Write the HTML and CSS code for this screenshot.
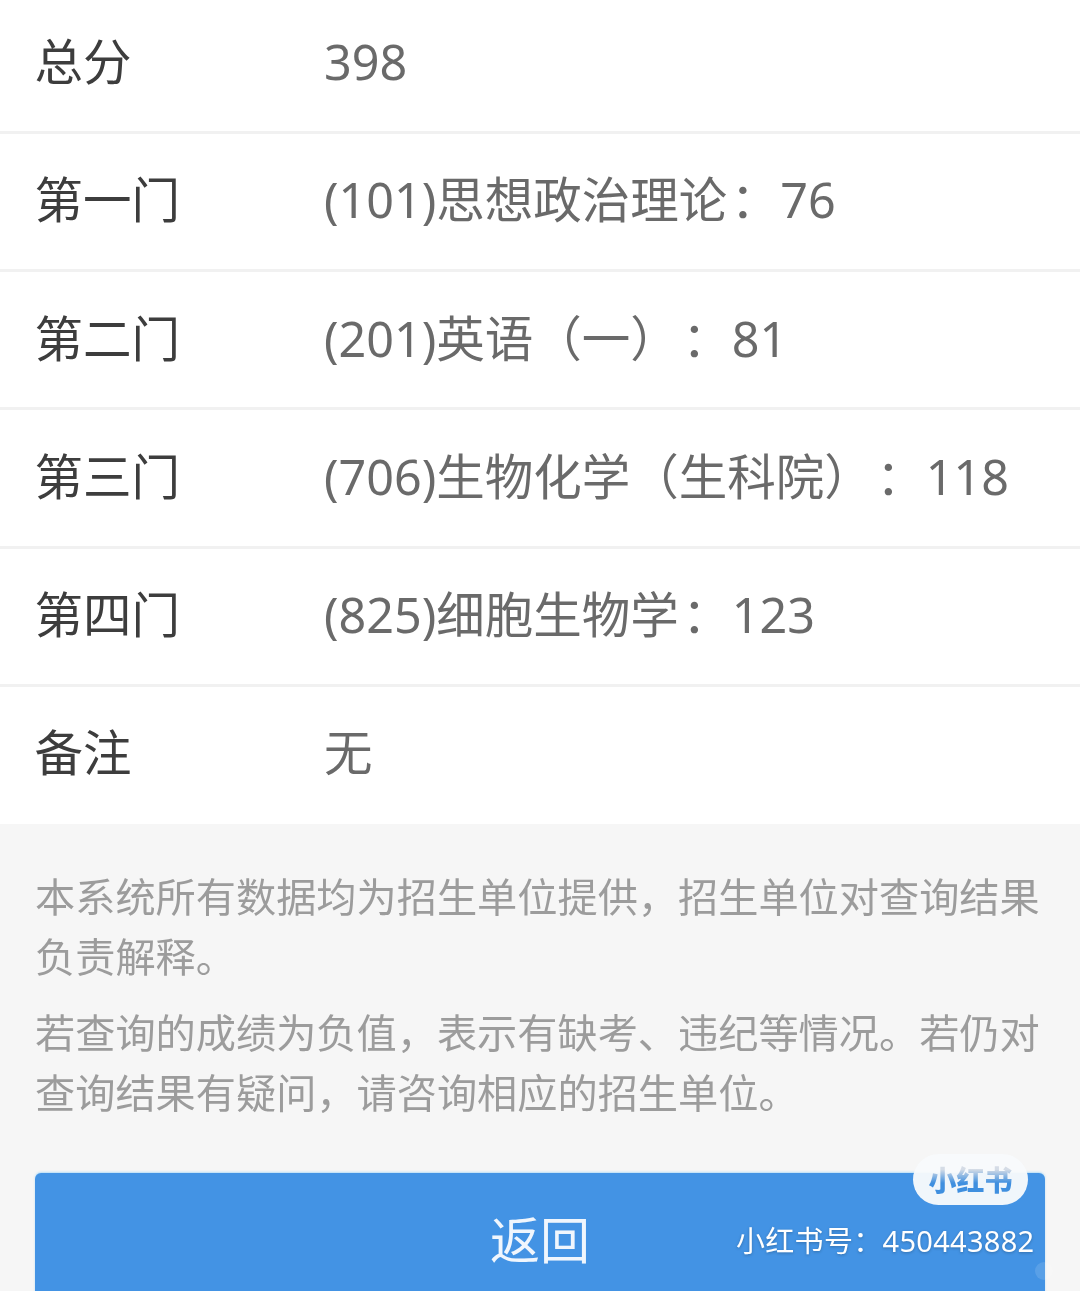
FILE: index.html
```html
<!DOCTYPE html>
<html lang="zh-CN">
<head>
<meta charset="utf-8">
<title>成绩查询</title>
<link rel="stylesheet" href="styles.css">
</head>
<body>
<main class="page">
  <section class="scores">
    <div class="row"><div class="label">总分</div><div class="value">398</div></div>
    <div class="row"><div class="label">第一门</div><div class="value">(101)思想政治理论<span class="colon">：</span>76</div></div>
    <div class="row"><div class="label">第二门</div><div class="value">(201)英语（一）<span class="colon">：</span>81</div></div>
    <div class="row"><div class="label">第三门</div><div class="value">(706)生物化学（生科院）<span class="colon">：</span>118</div></div>
    <div class="row"><div class="label">第四门</div><div class="value">(825)细胞生物学<span class="colon">：</span>123</div></div>
    <div class="row"><div class="label">备注</div><div class="value">无</div></div>
  </section>
  <section class="notes">
    <p class="note">本系统所有数据均为招生单位提供，招生单位对查询结果负责解释。</p>
    <p class="note">若查询的成绩为负值，表示有缺考、违纪等情况。若仍对查询结果有疑问，请咨询相应的招生单位。</p>
    <button class="back" type="button">返回</button>
  </section>
  <div class="wm-pill"><span class="wm-logo">小红书</span></div>
  <div class="wm-id">小红书号：450443882</div>
  <div class="wm-dot"></div>
</main>
</body>
</html>
```
FILE: styles.css
```css
* { box-sizing: border-box; }
html, body { margin: 0; padding: 0; }
body {
  width: 1080px;
  height: 1291px;
  overflow: hidden;
  font-family: "Noto Sans", "Noto Sans CJK SC", sans-serif;
  background: #f6f6f6;
  text-spacing-trim: space-all;
}
.page { position: relative; width: 1080px; height: 1291px; overflow: hidden; filter: blur(0.45px); }
.scores { background: #fff; height: 824px; overflow: hidden; }
.row {
  display: flex;
  align-items: center;
  height: 138.4px;
  padding: 0 0 4px 34.5px;
  border-bottom: 3px solid #f1f1f1;
  font-size: 48.5px;
  line-height: 60px;
}
.row:first-child { height: 133.5px; padding-bottom: 8px; }
.row:last-child { border-bottom: 0; padding-bottom: 8px; }
.label { width: 289.5px; color: #3d3d3d; }
.value { color: #6a6a6a; white-space: nowrap; }
.colon { margin-left: 3.5px; margin-right: 1px; }
.notes { padding: 43px 35px 0; }
.note {
  margin: 0 0 16px;
  font-size: 40.2px;
  line-height: 60px;
  color: #9c9c9c;
}
.back {
  display: block;
  width: 1010px;
  height: 135px;
  margin: 50px 0 0;
  border: 0;
  border-radius: 6px;
  background: #4393e4;
  box-shadow: 0 -1px 2px rgba(120, 200, 250, 0.5);
  color: #f0f6fd;
  font-family: inherit;
  font-size: 50px;
  line-height: 60px;
  text-align: center;
  padding: 0 0 2px;
}
.wm-pill {
  position: absolute;
  left: 913px;
  top: 1154px;
  width: 115px;
  height: 51px;
  border-radius: 26px;
  background: rgba(248, 250, 252, 0.96);
  text-align: center;
  line-height: 52px;
}
.wm-logo {
  font-size: 28px;
  font-weight: 900;
  color: transparent;
  background: linear-gradient(to bottom, #d5dce6 22%, #3f8fdf 58%);
  -webkit-background-clip: text;
  background-clip: text;
}
.wm-id {
  position: absolute;
  left: 736px;
  top: 1221px;
  color: #fff;
  font-size: 29px;
  letter-spacing: 0.3px;
  line-height: 40px;
  white-space: nowrap;
  text-shadow: 0 1px 3px rgba(0, 0, 0, 0.25);
}
.wm-dot {
  position: absolute;
  left: 1035px;
  top: 1262px;
  width: 18px;
  height: 18px;
  border-radius: 50%;
  background: rgba(255, 255, 255, 0.12);
}
```
